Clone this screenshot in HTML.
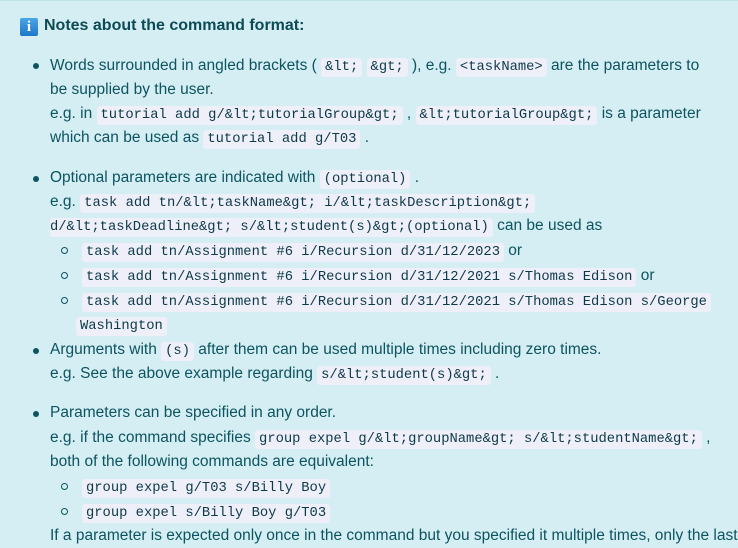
<!DOCTYPE html>
<html><head><meta charset="utf-8"><style>
html,body{margin:0;padding:0;}
body{width:738px;height:529px;overflow:hidden;background:#d5eef3;color:#0c5460;font-family:"Liberation Sans",sans-serif;font-size:15.5px;position:relative;border-top:1px solid #bfe3ea;box-sizing:border-box}
.l{position:absolute;white-space:nowrap;height:24px;line-height:24px}
code{font-family:"Liberation Mono",monospace;font-size:13.8px;background:#eeeff8;padding:2px 4px;border-radius:3px;color:#0c3a4a}
.b{position:absolute;width:6px;height:6px;border-radius:50%;background:#0c5460}
.c{position:absolute;width:5px;height:5px;border-radius:50%;border:1.3px solid #0c5460;box-sizing:content-box}
.h{font-weight:bold;font-size:16px;color:#0c4a55}
.ic{position:absolute;left:20px;top:17px;width:18px;height:18px;background:linear-gradient(#4aa6e6,#1c77c8);border-radius:2px;color:#fff;font-weight:bold;font-size:15px;text-align:center;line-height:19px;font-family:"Liberation Serif",serif}
</style></head><body>
<div class="ic">i</div>
<div class="l h" style="left:44px;top:13px">Notes about the command format:</div>

<div class="b" style="left:33px;top:62px"></div>
<div class="l" style="left:50px;top:53px">Words surrounded in angled brackets ( <code>&amp;lt;</code> <code>&amp;gt;</code> ), e.g. <code>&lt;taskName&gt;</code> are the parameters to</div>
<div class="l" style="left:50px;top:77px">be supplied by the user.</div>
<div class="l" style="left:50px;top:101px">e.g. in <code>tutorial add g/&amp;lt;tutorialGroup&amp;gt;</code> , <code>&amp;lt;tutorialGroup&amp;gt;</code> is a parameter</div>
<div class="l" style="left:50px;top:125px">which can be used as <code>tutorial add g/T03</code> .</div>

<div class="b" style="left:33px;top:175px"></div>
<div class="l" style="left:50px;top:165px">Optional parameters are indicated with <code>(optional)</code> .</div>
<div class="l" style="left:50px;top:189px">e.g. <code>task add tn/&amp;lt;taskName&amp;gt; i/&amp;lt;taskDescription&amp;gt;</code></div>
<div class="l" style="left:50px;top:213px"><code style="padding-left:0">d/&amp;lt;taskDeadline&amp;gt; s/&amp;lt;student(s)&amp;gt;(optional)</code> can be used as</div>
<div class="c" style="left:61px;top:246px"></div>
<div class="l" style="left:82px;top:238px"><code>task add tn/Assignment #6 i/Recursion d/31/12/2023</code> or</div>
<div class="c" style="left:61px;top:271px"></div>
<div class="l" style="left:82px;top:263px"><code>task add tn/Assignment #6 i/Recursion d/31/12/2021 s/Thomas Edison</code> or</div>
<div class="c" style="left:61px;top:296px"></div>
<div class="l" style="left:82px;top:288px"><code>task add tn/Assignment #6 i/Recursion d/31/12/2021 s/Thomas Edison s/George</code></div>
<div class="l" style="left:76px;top:312px"><code>Washington</code></div>

<div class="b" style="left:33px;top:347px"></div>
<div class="l" style="left:50px;top:337px">Arguments with <code>(s)</code> after them can be used multiple times including zero times.</div>
<div class="l" style="left:50px;top:361px">e.g. See the above example regarding <code>s/&amp;lt;student(s)&amp;gt;</code> .</div>

<div class="b" style="left:33px;top:410px"></div>
<div class="l" style="left:50px;top:400px">Parameters can be specified in any order.</div>
<div class="l" style="left:50px;top:425px">e.g. if the command specifies <code>group expel g/&amp;lt;groupName&amp;gt; s/&amp;lt;studentName&amp;gt;</code> ,</div>
<div class="l" style="left:50px;top:449px">both of the following commands are equivalent:</div>
<div class="c" style="left:61px;top:482px"></div>
<div class="l" style="left:82px;top:474px"><code>group expel g/T03 s/Billy Boy</code></div>
<div class="c" style="left:61px;top:507px"></div>
<div class="l" style="left:82px;top:499px"><code>group expel s/Billy Boy g/T03</code></div>
<div class="l" style="left:50px;top:523px">If a parameter is expected only once in the command but you specified it multiple times, only the last</div>
</body></html>
